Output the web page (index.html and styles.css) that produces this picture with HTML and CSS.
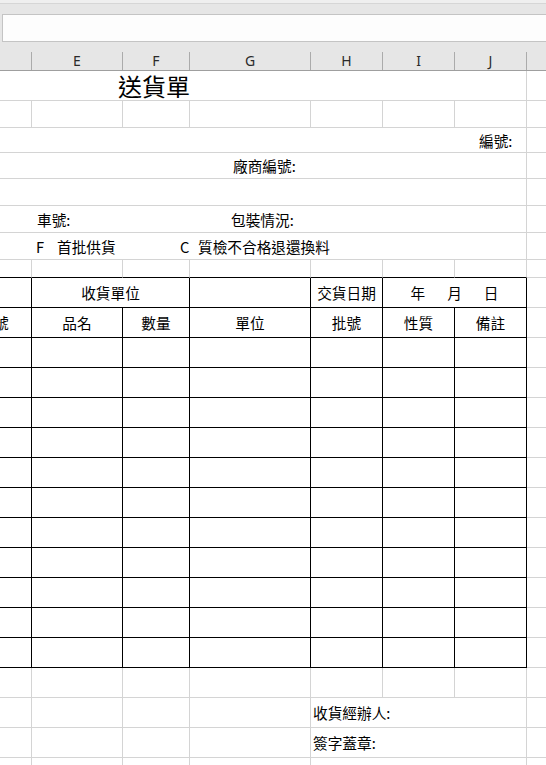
FILE: index.html
```html
<!DOCTYPE html>
<html lang="zh-Hant">
<head>
<meta charset="utf-8">
<title>送貨單</title>
<link rel="stylesheet" href="styles.css">
</head>
<body>
<div class="app">
  <div class="topbar">
    <div class="strip"></div>
    <div class="formula"></div>
  </div>
  <div class="colhead">
    <div class="ch"></div>
    <div class="ch">E</div>
    <div class="ch">F</div>
    <div class="ch">G</div>
    <div class="ch">H</div>
    <div class="ch">I</div>
    <div class="ch">J</div>
    <div class="ch last"></div>
  </div>
  <div class="sheet">
    <!-- r1 title -->
    <div class="c span-all title-cell"><span class="title">送貨單</span></div>
    <div class="c k"></div>
    <!-- r2 -->
    <div class="c"></div><div class="c"></div><div class="c"></div><div class="c"></div><div class="c"></div><div class="c"></div><div class="c"></div><div class="c k"></div>
    <!-- r3 -->
    <div class="c span-all pad-no">編號:</div>
    <div class="c k"></div>
    <!-- r4 -->
    <div class="c span-all pad-vendor">廠商編號:</div>
    <div class="c k"></div>
    <!-- r5 -->
    <div class="c span-all"></div>
    <div class="c k"></div>
    <!-- r6 -->
    <div class="c span-all info-row car">
      <span>車號:</span><span>包裝情況:</span>
    </div>
    <div class="c k"></div>
    <!-- r7 -->
    <div class="c span-all info-row kinds">
      <span>F</span><span>首批供貨</span><span>C</span><span>質檢不合格退還換料</span>
    </div>
    <div class="c k"></div>
    <!-- r8 -->
    <div class="c tb"></div><div class="c tb"></div><div class="c tb"></div><div class="c tb"></div><div class="c tb"></div><div class="c tb"></div><div class="c tb"></div><div class="c k"></div>
    <!-- r9 table head 1 -->
    <div class="c t"></div>
    <div class="c t ctr span-ef">收貨單位</div>
    <div class="c t"></div>
    <div class="c t ctr">交貨日期</div>
    <div class="c t ctr span-ij"><span class="date"><span>年</span><span>月</span><span>日</span></span></div>
    <div class="c k"></div>
    <!-- r10 table head 2 -->
    <div class="c t cut"><span>號</span></div>
    <div class="c t ctr">品名</div>
    <div class="c t ctr">數量</div>
    <div class="c t ctr">單位</div>
    <div class="c t ctr">批號</div>
    <div class="c t ctr">性質</div>
    <div class="c t ctr">備註</div>
    <div class="c k"></div>
    <!-- data rows x11 -->
    <div class="c t"></div><div class="c t"></div><div class="c t"></div><div class="c t"></div><div class="c t"></div><div class="c t"></div><div class="c t"></div><div class="c k"></div>
    <div class="c t"></div><div class="c t"></div><div class="c t"></div><div class="c t"></div><div class="c t"></div><div class="c t"></div><div class="c t"></div><div class="c k"></div>
    <div class="c t"></div><div class="c t"></div><div class="c t"></div><div class="c t"></div><div class="c t"></div><div class="c t"></div><div class="c t"></div><div class="c k"></div>
    <div class="c t"></div><div class="c t"></div><div class="c t"></div><div class="c t"></div><div class="c t"></div><div class="c t"></div><div class="c t"></div><div class="c k"></div>
    <div class="c t"></div><div class="c t"></div><div class="c t"></div><div class="c t"></div><div class="c t"></div><div class="c t"></div><div class="c t"></div><div class="c k"></div>
    <div class="c t"></div><div class="c t"></div><div class="c t"></div><div class="c t"></div><div class="c t"></div><div class="c t"></div><div class="c t"></div><div class="c k"></div>
    <div class="c t"></div><div class="c t"></div><div class="c t"></div><div class="c t"></div><div class="c t"></div><div class="c t"></div><div class="c t"></div><div class="c k"></div>
    <div class="c t"></div><div class="c t"></div><div class="c t"></div><div class="c t"></div><div class="c t"></div><div class="c t"></div><div class="c t"></div><div class="c k"></div>
    <div class="c t"></div><div class="c t"></div><div class="c t"></div><div class="c t"></div><div class="c t"></div><div class="c t"></div><div class="c t"></div><div class="c k"></div>
    <div class="c t"></div><div class="c t"></div><div class="c t"></div><div class="c t"></div><div class="c t"></div><div class="c t"></div><div class="c t"></div><div class="c k"></div>
    <div class="c t"></div><div class="c t"></div><div class="c t"></div><div class="c t"></div><div class="c t"></div><div class="c t"></div><div class="c t"></div><div class="c k"></div>
    <!-- r22 -->
    <div class="c"></div><div class="c"></div><div class="c"></div><div class="c"></div><div class="c"></div><div class="c"></div><div class="c"></div><div class="c k"></div>
    <!-- r23 -->
    <div class="c"></div><div class="c"></div><div class="c"></div><div class="c"></div>
    <div class="c span-hj sign">收貨經辦人:</div>
    <div class="c k"></div>
    <!-- r24 -->
    <div class="c"></div><div class="c"></div><div class="c"></div><div class="c"></div>
    <div class="c span-hj sign">簽字蓋章:</div>
    <div class="c k"></div>
    <!-- r25 -->
    <div class="c"></div><div class="c"></div><div class="c"></div><div class="c"></div>
    <div class="c span-hj"></div>
    <div class="c k"></div>
  </div>
</div>
</body>
</html>
```

FILE: styles.css
```css
html, body {
  margin: 0;
  padding: 0;
  background: #ffffff;
}

body {
  width: 546px;
  height: 765px;
  overflow: hidden;
  font-family: "Noto Sans CJK TC", "Noto Sans", sans-serif;
  font-size: 14.67px;
  color: #000;
}

.app {
  display: flex;
  flex-direction: column;
}

/* ---------- top chrome ---------- */
.topbar {
  height: 52px;
  background: #e6e6e6;
  display: flex;
  flex-direction: column;
}

.strip {
  height: 3px;
  background: #efefef;
  border-bottom: 1px solid #d6d6d6;
}

.formula {
  box-sizing: border-box;
  height: 28px;
  margin: 10px -6px 0 2px;
  background: #fdfdfd;
  border: 1px solid #c4c4c4;
}

/* ---------- column header ---------- */
.colhead {
  display: grid;
  grid-template-columns: 32px 91px 67px 121px 72px 72px 72px 1fr;
  height: 19px;
  box-sizing: border-box;
  background: #e6e6e6;
  border-bottom: 1px solid #9f9f9f;
}

.ch {
  box-sizing: border-box;
  border-right: 1px solid #ababab;
  display: flex;
  align-items: center;
  justify-content: center;
  font-family: "Noto Sans", "Open Sans", sans-serif;
  font-size: 14px;
  line-height: 18px;
  color: #2a2a2a;
}

.ch.last {
  border-right: none;
}

/* ---------- sheet grid ---------- */
.sheet {
  display: grid;
  grid-template-columns: 32px 91px 67px 121px 72px 72px 72px 1fr;
  grid-template-rows: 30px 27px 25px 26px 27px 27px 27px 18px repeat(13, 30px) repeat(4, 30px);
}

.c {
  box-sizing: border-box;
  border-right: 1px solid #d4d4d4;
  border-bottom: 1px solid #d4d4d4;
  display: flex;
  align-items: center;
  white-space: nowrap;
  min-width: 0;
  line-height: 21px;
}

.c.k {
  border-right: none;
}

.span-all {
  grid-column: 1 / 8;
}

.span-ef {
  grid-column: 2 / 4;
}

.span-ij {
  grid-column: 6 / 8;
}

.span-hj {
  grid-column: 5 / 8;
}

/* title */
.title-cell {
  padding-left: 118px;
}

.title {
  font-size: 24px;
  line-height: 28px;
  padding-top: 1px;
}

.pad-no {
  padding-left: 479px;
}

.pad-vendor {
  padding-left: 233px;
}

.info-row {
  display: grid;
  align-items: center;
}

.info-row.car {
  grid-template-columns: 37px 194px 1fr;
}

.info-row.car span:first-child {
  grid-column: 2;
}

.info-row.kinds {
  grid-template-columns: 36px 21px 123px 18px 1fr;
}

.info-row.kinds span:first-child {
  grid-column: 2;
}

/* table */
.tb {
  border-bottom-color: #000;
}

.t {
  border-right-color: #000;
  border-bottom-color: #000;
}

.ctr {
  justify-content: center;
}

.date {
  display: flex;
  gap: 22px;
}

.cut {
  overflow: hidden;
}

.cut span {
  margin-left: -6px;
}

.sign {
  padding-left: 2px;
}
```
